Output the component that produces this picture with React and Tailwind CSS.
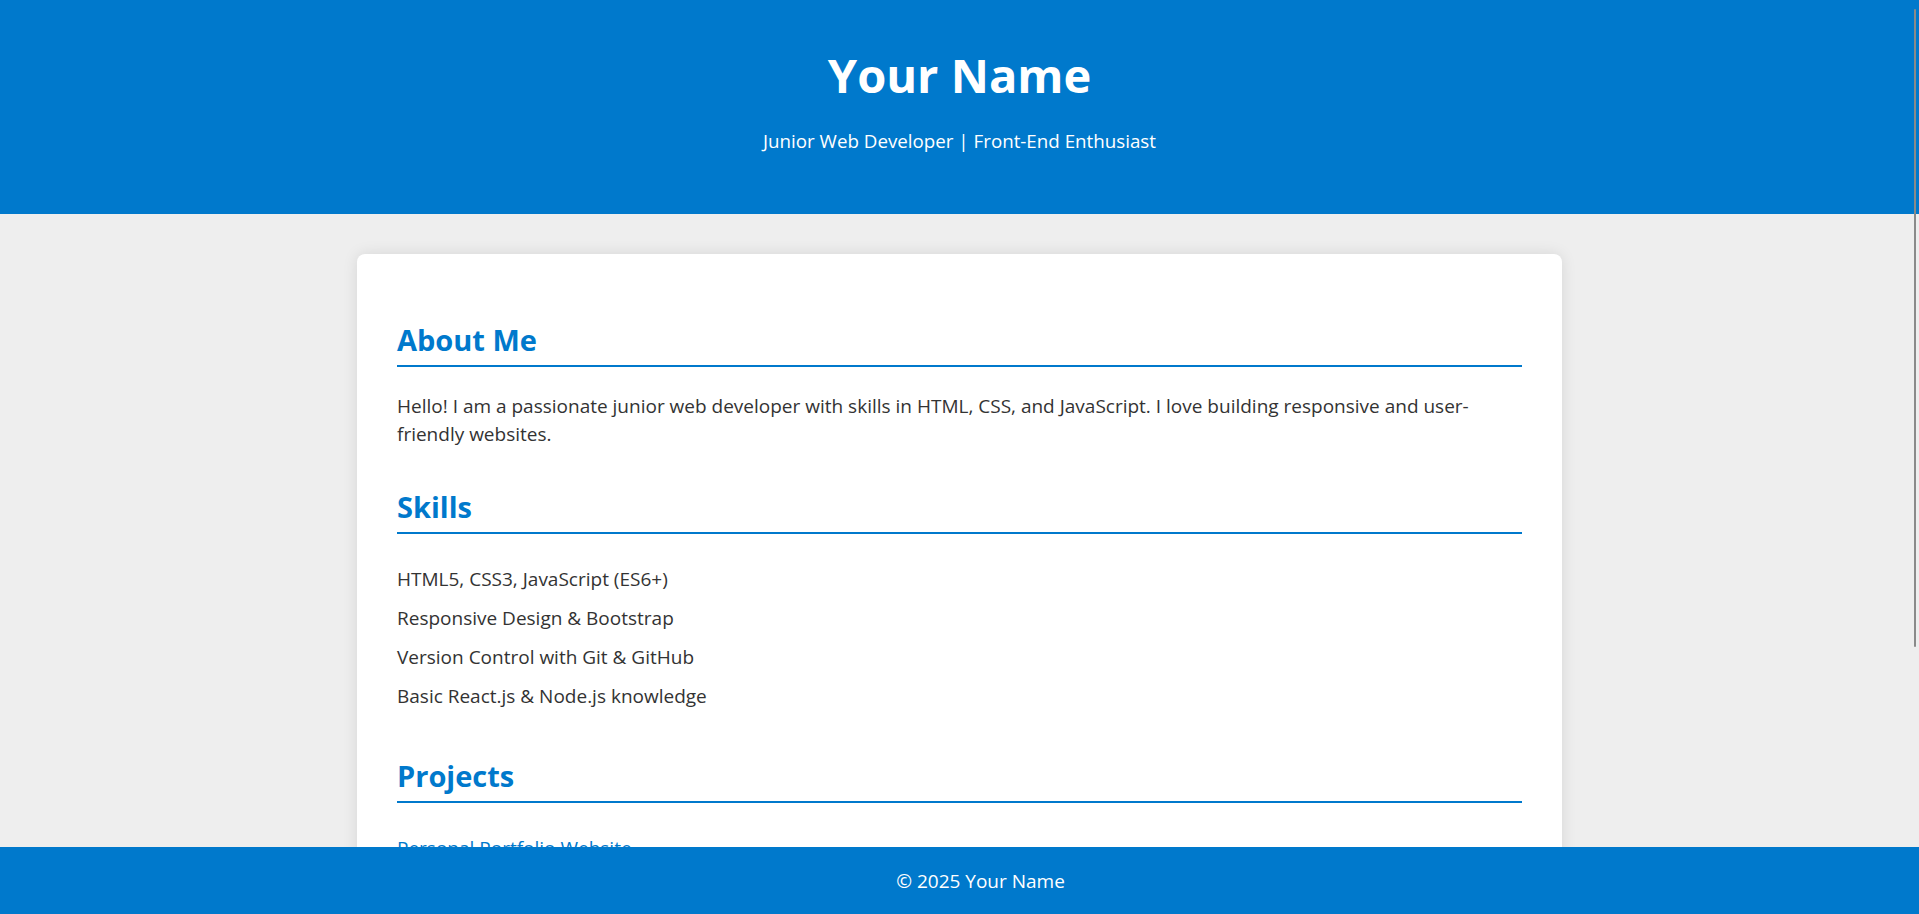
const skills = [
  "HTML5, CSS3, JavaScript (ES6+)",
  "Responsive Design & Bootstrap",
  "Version Control with Git & GitHub",
  "Basic React.js & Node.js knowledge",
];

const projects = [
  { name: "Personal Portfolio Website", desc: "A responsive site to showcase my work." },
  { name: "To-Do List App", desc: "Simple task manager built with vanilla JavaScript." },
];

function SectionTitle({ children }) {
  return (
    <h2 className="text-[29px] leading-[36px] font-bold text-[#0079cc] pb-[7px] border-b-2 border-[#0079cc]">
      {children}
    </h2>
  );
}

export default function App() {
  return (
    <div
      className="relative h-screen flex flex-col overflow-hidden bg-[#eeeeee] text-[#333333]"
      style={{ fontFamily: '"Open Sans", "Noto Sans", sans-serif' }}
    >
      {/* Header */}
      <header className="bg-[#0079cc] text-white text-center pt-[47px] pb-[60px] shrink-0">
        <h1 className="text-[47px] leading-[56px] font-bold">Your Name</h1>
        <p className="mt-[25px] text-[18.75px] leading-[26px]">Junior Web Developer | Front-End Enthusiast</p>
      </header>

      {/* Main card */}
      <main className="flex-1 min-h-0 overflow-hidden pt-[40px]">
        <div className="mx-auto w-[1205px] bg-white rounded-lg shadow-[0_0_15px_rgba(0,0,0,0.1)] px-[40px] pt-[68px] pb-[40px] text-[19px]">
          <section>
            <SectionTitle>About Me</SectionTitle>
            <p className="mt-[25px] leading-[28px]">
              Hello! I am a passionate junior web developer with skills in HTML, CSS, and JavaScript. I love building responsive and user-friendly websites.
            </p>
          </section>

          <section className="mt-[41px]">
            <SectionTitle>Skills</SectionTitle>
            <ul className="mt-[26px]">
              {skills.map(s => (
                <li key={s} className="leading-[39px]">{s}</li>
              ))}
            </ul>
          </section>

          <section className="mt-[42px]">
            <SectionTitle>Projects</SectionTitle>
            <ul className="mt-[26px]">
              {projects.map(p => (
                <li key={p.name} className="leading-[39px]">
                  <a href="#" className="text-[#0079cc]">{p.name}</a>
                  <p className="leading-[28px]">{p.desc}</p>
                </li>
              ))}
            </ul>
          </section>
        </div>
      </main>

      {/* Footer */}
      <footer className="h-[67px] shrink-0 bg-[#0079cc] text-white text-center pt-[21px] pl-[42px] text-[19px] leading-[27px]">
        © 2025 Your Name
      </footer>

      {/* overlay scrollbar thumb */}
      <div className="absolute right-[3px] top-[9px] w-[2px] h-[638px] bg-[#8a8a8a] rounded-full" />
    </div>
  );
}
